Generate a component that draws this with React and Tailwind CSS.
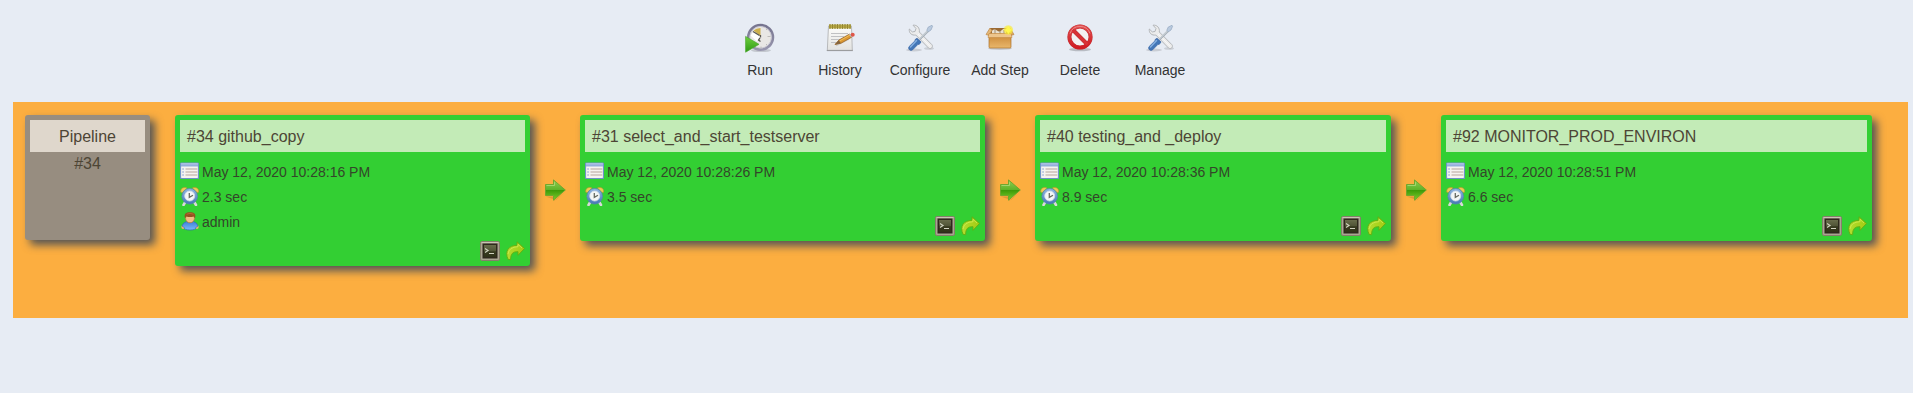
import React from "react";

function RunIcon() {
  return (
    <svg viewBox="0 0 32 32" className="size-8" aria-hidden="true">
      <defs>
        <linearGradient id="run-ring" x1="0" y1="0" x2="0" y2="1">
          <stop offset="0" stopColor="#76748f" />
          <stop offset="1" stopColor="#9896ae" />
        </linearGradient>
        <linearGradient id="run-play" x1="0" y1="0" x2="0" y2="1">
          <stop offset="0" stopColor="#6fd03f" />
          <stop offset="1" stopColor="#2f9a14" />
        </linearGradient>
      </defs>
      <ellipse cx="17" cy="29.5" rx="10" ry="1.6" fill="#000" opacity=".15" />
      <circle cx="16.600" cy="16.300" r="12.300" fill="#e9e7e5" stroke="url(#run-ring)" strokeWidth="2.700" />
      <circle cx="16.600" cy="16.300" r="10.800" fill="none" stroke="#c6c5d0" strokeWidth=".9" />
      <path d="M16.500 15 9.500 9.500Q12 7 16.500 7Z" fill="#cdb04c" />
      <path d="M6.500 14.500 9 11 16 15 15.500 19 13 20.500Z" fill="#fff" />
      <path d="M9 10.500 15.500 14.500M16.500 14V16.500M16 17l-1.500 2 2 1.500" fill="none" stroke="#5a5750" strokeWidth="1.300" />
      <path d="M23.500 15.500h3M17 25.500v2M22 9l1-1M22 23l1 1" stroke="#b3b1ae" strokeWidth=".8" />
      <path d="M1.600 15.400 15 23.300 1.600 31.200Z" fill="url(#run-play)" stroke="#4aa82c" strokeWidth=".7" />
    </svg>
  );
}

function HistoryIcon() {
  return (
    <svg viewBox="0 0 32 32" className="size-8" aria-hidden="true">
      <defs>
        <linearGradient id="note-paper" x1="0" y1="0" x2="0" y2="1">
          <stop offset="0" stopColor="#fdfdfb" />
          <stop offset="1" stopColor="#e2e2e0" />
        </linearGradient>
      </defs>
      <path d="M4.500 5h23l.8 24.500H3.300Z" fill="url(#note-paper)" stroke="#b2b3b4" strokeWidth=".9" />
      <path d="M2.800 29.500h26" stroke="#9b9c9e" strokeWidth="1.200" />
      <rect x="5" y="3.500" width="22" height="4" fill="#b9a945" />
      <path d="M6 3v5M8.500 3v5M11 3v5M13.500 3v5M16 3v5M18.500 3v5M21 3v5M23.500 3v5M26 3v5" stroke="#8f8230" strokeWidth=".9" />
      <path d="M7 12.500h17M7 15.500h13M7 18.500h9M7 21.500h5" stroke="#c0c1c3" strokeWidth="1" />
      <path d="M12 24.500 25 18" stroke="#000" strokeWidth="1.600" opacity=".12" />
      <path d="M11 23.500 15 19 25.700 13 28 16 17 22.200Z" fill="#dc9832" stroke="#9c6625" strokeWidth=".8" />
      <path d="M15.500 20 26 14" stroke="#f0bf5a" strokeWidth="1" />
      <path d="M11 23.500 14.800 19.200 16.800 22.200Z" fill="#80623f" />
      <path d="M25 13.400 26.300 12.700 28.600 15.700 27.300 16.400Z" fill="#b8bbc0" />
      <circle cx="28.700" cy="13.700" r="2" fill="#df5648" />
    </svg>
  );
}

function ToolsIcon() {
  return (
    <svg viewBox="0 0 32 32" className="size-8" aria-hidden="true">
      <ellipse cx="10" cy="29" rx="8" ry="1.500" fill="#000" opacity=".13" />
      <ellipse cx="25" cy="27.500" rx="5" ry="1.300" fill="#000" opacity=".12" />
      <path
        d="M9 4.200 12 7.500 11 10.500 8.300 10.900 5.300 8C4.800 12 7.600 14.700 11.800 14L24.500 27C26.500 29 29.800 26 27.900 23.700L15.300 11C16 7 13 3.700 9 4.200Z"
        fill="#ececec"
        stroke="#b3b6b9"
        strokeWidth="1"
      />
      <path d="M14 13 26 25.200" stroke="#fafafa" strokeWidth="1" />
      <path d="M15.500 18.500 24.500 9.500" stroke="#a3acb5" strokeWidth="2.200" />
      <path d="M15.500 18 24.500 9" stroke="#e1e6ea" strokeWidth=".9" />
      <path d="M22.800 9.200 24.300 6 28 4.300 28.600 5.200 27 9 24.300 10.800Z" fill="#b9cadf" stroke="#94a8c0" strokeWidth=".7" />
      <path d="M13 17.300 17 21 15.300 23.300 14 23.300 8.600 28.800C6.500 30.500 3.700 28 5 25.700L11 19.800 11.200 18.500Z" fill="#4377b8" stroke="#3b67a4" strokeWidth=".8" />
      <path d="M12.500 19.500 6.500 26" stroke="#85afe0" strokeWidth="1.500" strokeLinecap="round" />
    </svg>
  );
}

function AddStepIcon() {
  return (
    <svg viewBox="0 0 32 32" className="size-8" aria-hidden="true">
      <defs>
        <linearGradient id="box-front" x1="0" y1="0" x2="0" y2="1">
          <stop offset="0" stopColor="#c98634" />
          <stop offset="1" stopColor="#e9b76b" />
        </linearGradient>
        <radialGradient id="box-star">
          <stop offset="0" stopColor="#fffde0" />
          <stop offset=".45" stopColor="#fdf04a" />
          <stop offset="1" stopColor="#f9e92c" stopOpacity=".5" />
        </radialGradient>
      </defs>
      <ellipse cx="16" cy="27.500" rx="12" ry="1.500" fill="#000" opacity=".15" />
      <path d="M6 7h20v8H6Z" fill="#9b6a34" />
      <path d="M8 9.500q2.500-2 5 0t5-.5 4 .5v4H8Z" fill="#e9e0cf" />
      <path d="M11 9v4M16 9v4M20 9v3" stroke="#8b7a5a" strokeWidth=".8" />
      <path d="M6 7 2 13.500 5 14.500 8 9.500Z" fill="#e5b878" stroke="#b37a37" strokeWidth=".6" />
      <path d="M26 7 30 13.500 27 14.500 24 9.500Z" fill="#dba765" stroke="#b37a37" strokeWidth=".6" />
      <path d="M5 13h22v13q0 1-1 1H6q-1 0-1-1Z" fill="url(#box-front)" stroke="#ae722b" strokeWidth=".7" />
      <path d="M5 12.500h22l1 4H4Z" fill="#edc58c" stroke="#c48b45" strokeWidth=".6" />
      <circle cx="24.300" cy="9" r="4.800" fill="url(#box-star)" />
      <path d="m24.300 4.500 1.200 3.200 3.200 1.300-3.200 1.300-1.200 3.200-1.200-3.200L20 9l3.200-1.300Z" fill="#fff94d" />
    </svg>
  );
}

function DeleteIcon() {
  return (
    <svg viewBox="0 0 32 32" className="size-8" aria-hidden="true">
      <defs>
        <linearGradient id="deny" x1="0" y1="0" x2="0" y2="1">
          <stop offset="0" stopColor="#df4c4e" />
          <stop offset="1" stopColor="#d01d23" />
        </linearGradient>
      </defs>
      <ellipse cx="16" cy="28.500" rx="11" ry="1.800" fill="#000" opacity=".2" />
      <circle cx="16" cy="16" r="10.600" fill="#f3f1f2" stroke="#c02f33" strokeWidth="4" />
      <path d="M8.500 8.500 23.500 23.500" stroke="#c02f33" strokeWidth="4" />
      <circle cx="16" cy="16" r="10.600" fill="none" stroke="url(#deny)" strokeWidth="3.200" />
      <path d="M8.500 8.500 23.500 23.500" stroke="#d83236" strokeWidth="3" />
      <path d="M6 12.500A10.600 10.600 0 0 1 26 12.500" fill="none" stroke="#ec8784" strokeWidth="1" />
    </svg>
  );
}

function ListIcon() {
  return (
    <svg viewBox="0 0 19 19" className="size-[19px] shrink-0" aria-hidden="true">
      <rect x=".5" y="1" width="18" height="15.500" rx="1" fill="#f6f3f0" stroke="#6f92c8" strokeWidth="1.200" />
      <path d="M1 1.500h17v3H1Z" fill="#94aedd" />
      <path d="M1 2h17" stroke="#b4c6ea" strokeWidth=".8" />
      <path d="M5.500 7H17.300M5.500 10H17.300M5.500 13H17.300" stroke="#b5a69b" strokeWidth="1.200" />
      <path d="M2.300 7H3.800M2.300 10H3.800M2.300 13H3.800" stroke="#9fb5da" strokeWidth="1.300" />
    </svg>
  );
}

function ClockIcon() {
  return (
    <svg viewBox="0 0 19 19" className="size-[19px] shrink-0" aria-hidden="true">
      <defs>
        <linearGradient id="clock-body" x1="0" y1="0" x2="0" y2="1">
          <stop offset="0" stopColor="#92b7e2" />
          <stop offset="1" stopColor="#4577b5" />
        </linearGradient>
      </defs>
      <path d="M5 15.500 3.500 18M14.500 15.500 16 18" stroke="#d8d9d9" strokeWidth="2.600" strokeLinecap="round" />
      <path d="M.8 5.200C0 1.500 3.500-.5 7 1L2.300 5.500ZM18.600 5.200C19.400 1.500 15.900-.5 12.400 1L17 5.500Z" fill="#eccb55" stroke="#c0942b" strokeWidth=".6" />
      <circle cx="9.700" cy="9.300" r="7.800" fill="url(#clock-body)" stroke="#5580b6" strokeWidth=".7" />
      <circle cx="9.700" cy="9" r="5" fill="#f4f7f6" stroke="#d1dce8" strokeWidth=".8" />
      <path d="M9.300 6v4.300L13 8.200" fill="none" stroke="#666b62" strokeWidth="1.300" />
    </svg>
  );
}

function UserIcon() {
  return (
    <svg viewBox="0 0 19 19" className="size-[19px] shrink-0" aria-hidden="true">
      <defs>
        <linearGradient id="user-shirt" x1="0" y1="0" x2="0" y2="1">
          <stop offset="0" stopColor="#3e80d4" />
          <stop offset="1" stopColor="#79b8fa" />
        </linearGradient>
      </defs>
      <circle cx="3.200" cy="15" r="1.900" fill="#efb175" />
      <circle cx="16.800" cy="15" r="1.900" fill="#efb175" />
      <path d="M6.500 9.500Q3 10.500 2 14q1 0 2 1.500 0 2.500 6 2.500t6-2.500q1-1.500 2-1.500-1-3.500-4.500-4.500Q10 12 6.500 9.500Z" fill="url(#user-shirt)" stroke="#3469b2" strokeWidth=".7" />
      <circle cx="10" cy="6.300" r="4.400" fill="#f4be87" stroke="#bb7034" strokeWidth=".6" />
      <path d="M5 6.200C3.800 1.500 6 .2 10 .2s6.200 1.300 5 6L13.800 4.500Q10 5.500 6.300 4.500Z" fill="#96501f" />
      <path d="M6.500 2.200Q10 .5 13.500 2.200" stroke="#b36b32" fill="none" />
    </svg>
  );
}

function ConsoleIcon() {
  return (
    <svg viewBox="0 0 20 20" className="size-5" aria-hidden="true">
      <defs>
        <linearGradient id="console-screen" x1="0" y1="0" x2="0" y2="1">
          <stop offset="0" stopColor="#686c4a" />
          <stop offset=".5" stopColor="#505436" />
          <stop offset=".55" stopColor="#383b20" />
          <stop offset="1" stopColor="#303219" />
        </linearGradient>
      </defs>
      <rect x=".5" y=".5" width="19" height="19" rx="1.500" fill="#aaa592" stroke="#857f6b" />
      <path d="M1.500 1.500h17" stroke="#c9c4b4" />
      <rect x="2.500" y="2.500" width="15" height="15" fill="#2e291c" />
      <rect x="4" y="4" width="12" height="12" fill="url(#console-screen)" />
      <path d="M5 7.500 8 9.500 5 11.500M9 12.500h5" fill="none" stroke="#d0d2bf" strokeWidth="1.200" />
    </svg>
  );
}

function RetryIcon() {
  return (
    <svg viewBox="0 0 20 20" className="size-5" aria-hidden="true">
      <defs>
        <linearGradient id="retry-fill" x1="0" y1="0" x2="1" y2="0">
          <stop offset="0" stopColor="#b5dd30" />
          <stop offset="1" stopColor="#a3cb12" />
        </linearGradient>
      </defs>
      <path
        d="M12 .8 19.500 7.500 13 14.300V10.700Q5.500 10 5.500 18.700L3 18.300C-.5 10 3.500 4.500 12 4.300Z"
        fill="url(#retry-fill)"
        stroke="#62ae10"
        strokeWidth=".9"
        strokeLinejoin="round"
      />
      <path d="M3 13Q4 6 13 5.700V3.300L17 7" fill="none" stroke="#cde94e" strokeWidth=".9" />
    </svg>
  );
}

function NextArrow() {
  return (
    <svg viewBox="0 0 22 22" className="size-[22px]" aria-hidden="true">
      <defs>
        <linearGradient id="next-fill" x1="0" y1="0" x2="0" y2="1">
          <stop offset="0" stopColor="#8fce52" />
          <stop offset=".48" stopColor="#5fb32a" />
          <stop offset=".52" stopColor="#3d9a0a" />
          <stop offset="1" stopColor="#7ccf2a" />
        </linearGradient>
      </defs>
      <path d="M1.500 17.500H10V22L22 12 12 21" fill="#8a5a10" opacity=".25" />
      <path d="M1.500 5.500H9.500V.9L21.300 11 9.500 21.200V16.500H1.500Z" fill="url(#next-fill)" stroke="#6aa52c" strokeWidth=".9" strokeLinejoin="round" />
      <path d="M2.500 6.500h8V3.200" fill="none" stroke="#b9e38a" strokeWidth=".8" opacity=".8" />
    </svg>
  );
}

const actions = [
  { label: "Run", Icon: RunIcon },
  { label: "History", Icon: HistoryIcon },
  { label: "Configure", Icon: ToolsIcon },
  { label: "Add Step", Icon: AddStepIcon },
  { label: "Delete", Icon: DeleteIcon },
  { label: "Manage", Icon: ToolsIcon },
];

const builds = [
  { title: "#34 github_copy", date: "May 12, 2020 10:28:16 PM", time: "2.3 sec", user: "admin", size: "flex-[345_1_0%]" },
  { title: "#31 select_and_start_testserver", date: "May 12, 2020 10:28:26 PM", time: "3.5 sec", size: "flex-[395_1_0%]" },
  { title: "#40 testing_and _deploy", date: "May 12, 2020 10:28:36 PM", time: "8.9 sec", size: "flex-[346_1_0%]" },
  { title: "#92 MONITOR_PROD_ENVIRON", date: "May 12, 2020 10:28:51 PM", time: "6.6 sec", size: "flex-[421_1_0%]" },
];

function InfoRow({ Icon, children }) {
  return (
    <li className="flex h-[25px] items-center gap-[3px] text-sm text-[#34462a]">
      <Icon />
      <span>{children}</span>
    </li>
  );
}

function BuildCard({ build }) {
  return (
    <article className={`min-w-0 rounded-[3px] bg-[#33cf33] p-[5px] shadow-[5px_5px_8px_#555] ${build.size}`}>
      <h2 className="bg-[#c3ebb7] px-[7px] pt-[5px] pb-[3px] text-base">
        <a href="#build">{build.title}</a>
      </h2>
      <ul className="mt-[7px]">
        <InfoRow Icon={ListIcon}>{build.date}</InfoRow>
        <InfoRow Icon={ClockIcon}>{build.time}</InfoRow>
        {build.user && <InfoRow Icon={UserIcon}>{build.user}</InfoRow>}
      </ul>
      <div className="mt-[7px] flex justify-end gap-[5px]">
        <button type="button" aria-label="Console output">
          <ConsoleIcon />
        </button>
        <button type="button" aria-label="Run again">
          <RetryIcon />
        </button>
      </div>
    </article>
  );
}

export default function App() {
  return (
    <div className="bg-white font-['Liberation_Sans',Arial,sans-serif] text-[#4d4535]">
      <main className="bg-[#e7ecf4] pt-[21px] pr-[5px] pb-[75px] pl-[13px]">
        <nav className="flex justify-center pr-px pb-[22px]">
          {actions.map(({ label, Icon }) => (
            <a key={label} href="#action" className="flex w-20 flex-col items-center gap-[7px] text-sm text-[#333333]">
              <Icon />
              {label}
            </a>
          ))}
        </nav>
        <section className="flex items-start bg-[#fcae40] pt-[13px] pr-9 pb-[52px] pl-3">
          <div className="mr-[25px] h-[125px] w-[125px] shrink-0 rounded-[3px] bg-[#978d80] p-[5px] text-center text-base shadow-[5px_5px_8px_#555]">
            <h1 className="bg-[#dfd7cc] pt-[5px] pb-[3px]">Pipeline</h1>
            <p>#34</p>
          </div>
          {builds.map((build, i) => (
            <React.Fragment key={build.title}>
              {i > 0 && (
                <div className="mt-16 flex w-[50px] shrink-0 justify-center">
                  <NextArrow />
                </div>
              )}
              <BuildCard build={build} />
            </React.Fragment>
          ))}
        </section>
      </main>
    </div>
  );
}
